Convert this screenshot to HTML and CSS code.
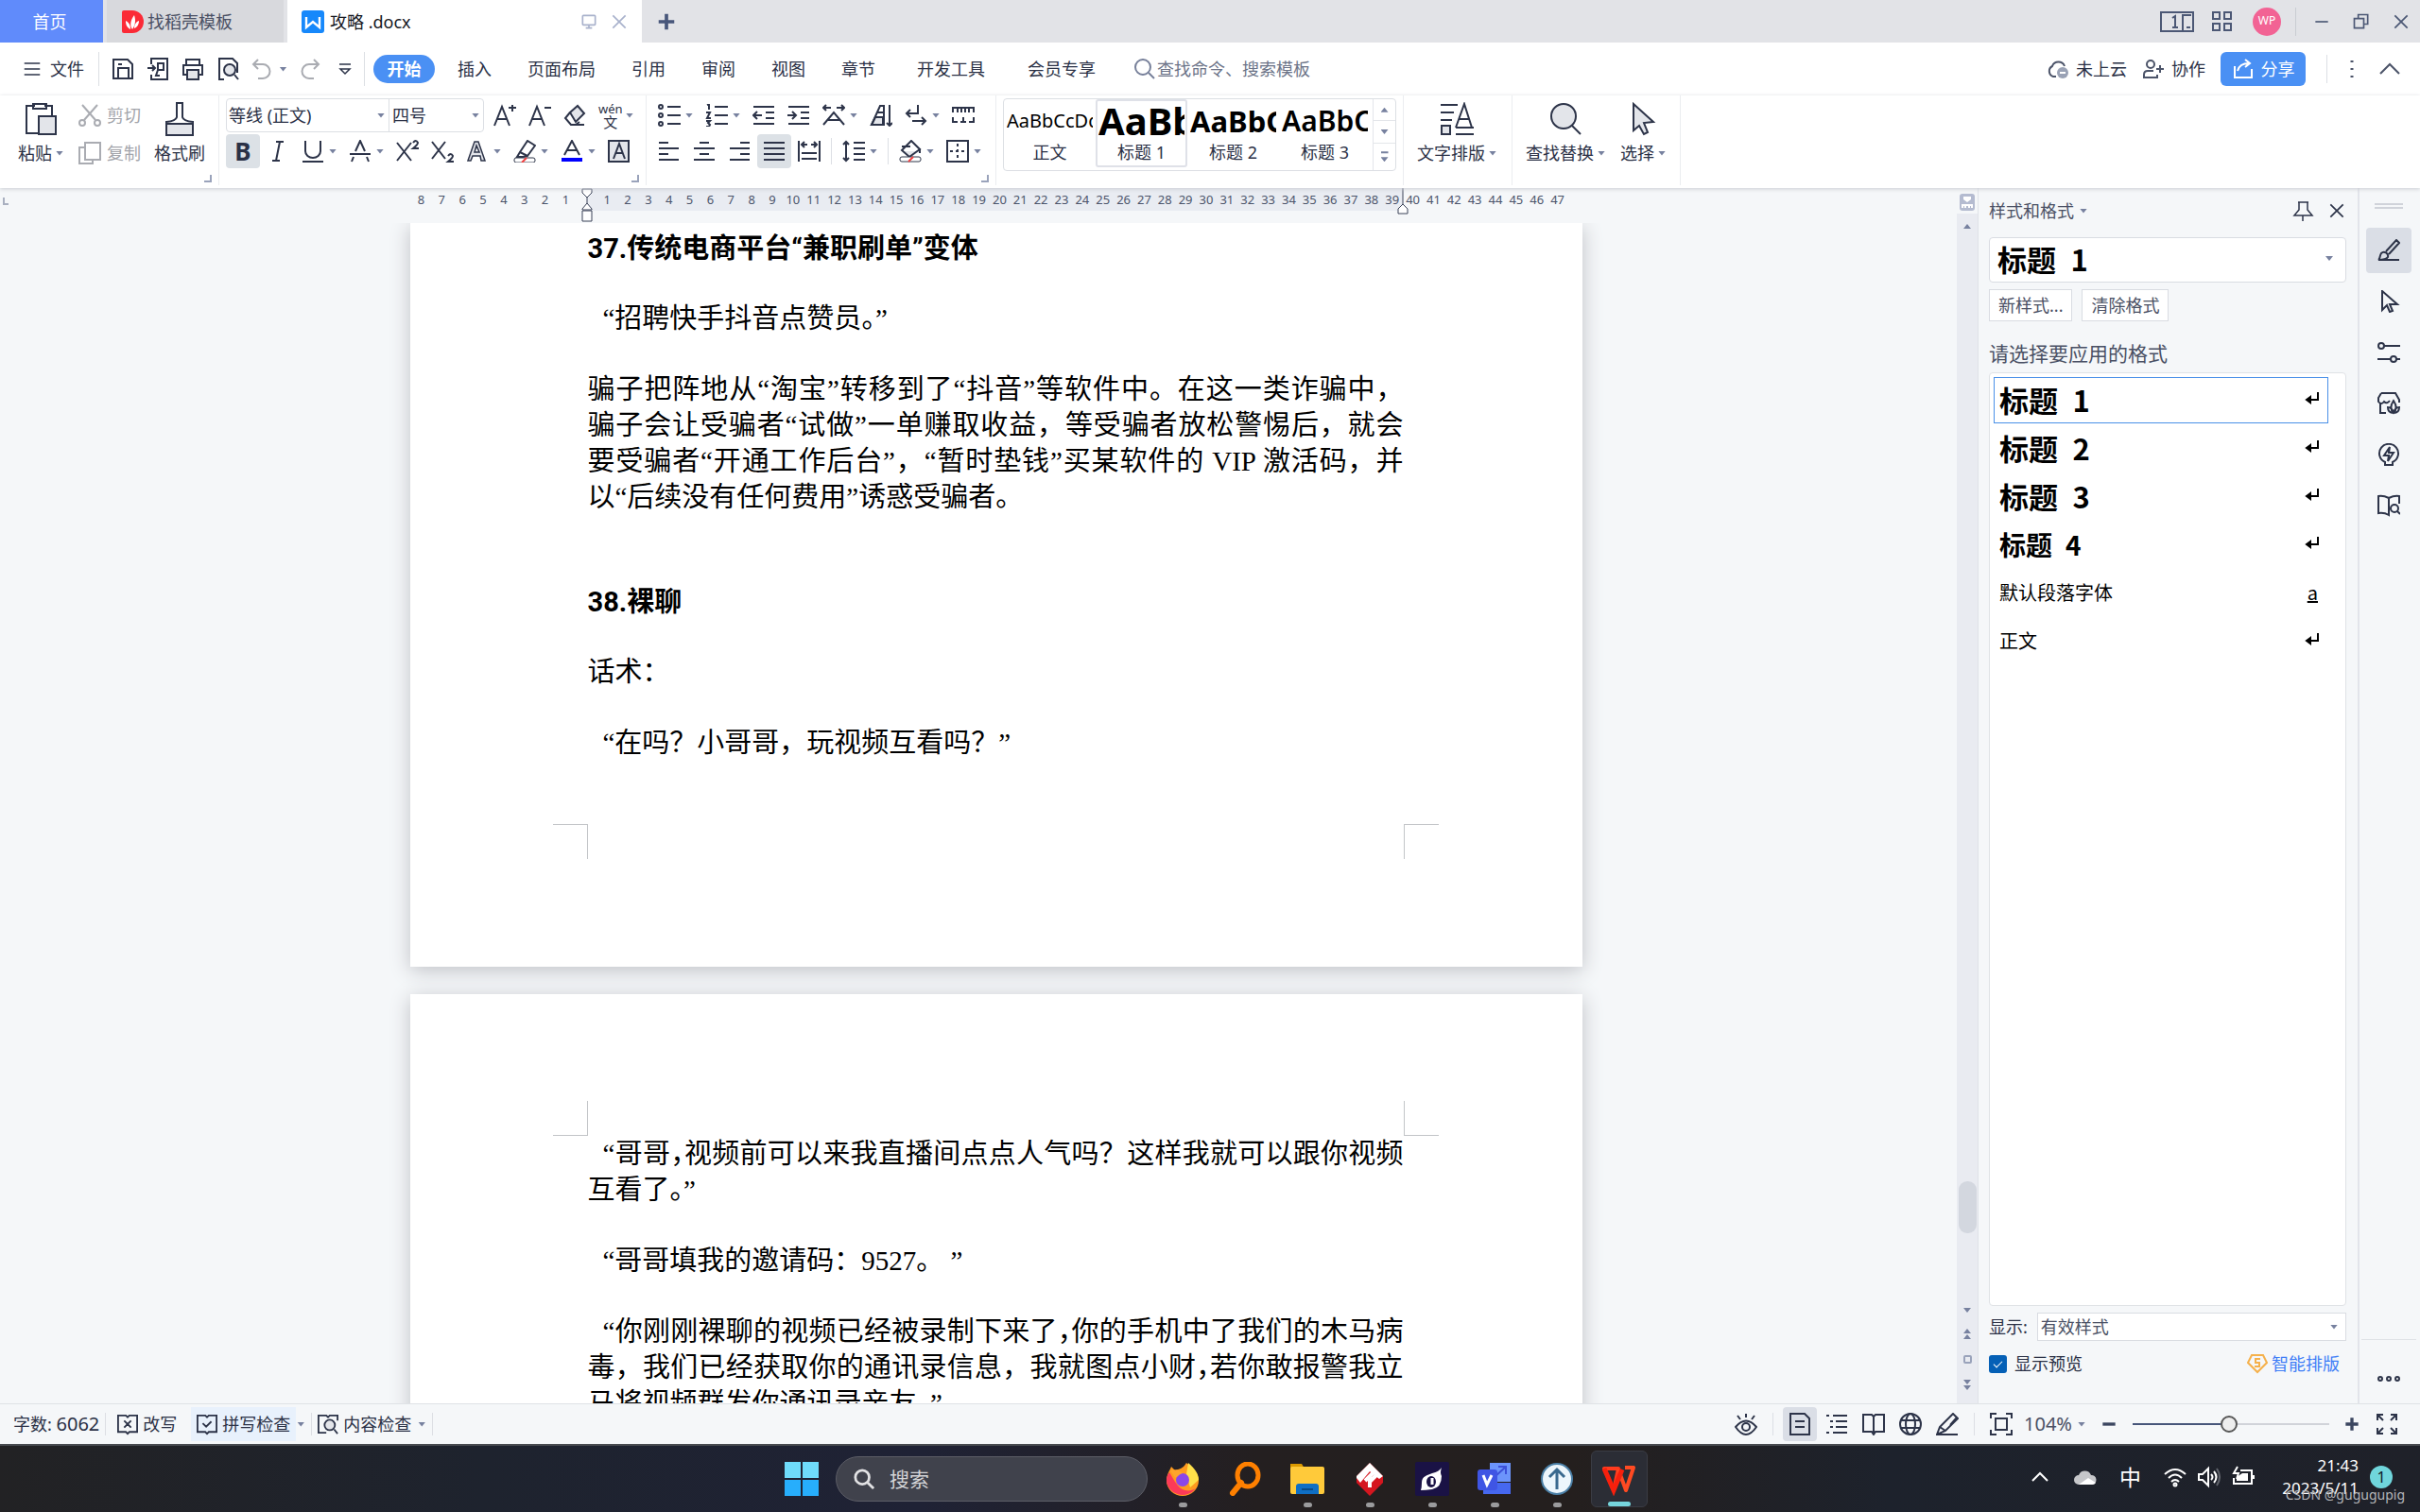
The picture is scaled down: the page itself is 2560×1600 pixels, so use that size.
FILE: index.html
```html
<!DOCTYPE html>
<html lang="zh-CN">
<head>
  <meta charset="UTF-8">
  <meta name="viewport" content="width=device-width, initial-scale=1.0">
  <title>攻略 .docx</title>
  <link rel="stylesheet" href="styles.css">
</head>
<body>

<!-- 标题栏 -->
<header class="titlebar">
  <button class="tab tab-home">首页</button>
  <button class="tab tab-docer">
    <svg width="24" height="24" viewBox="0 0 24 24"><path d="M3 0h9a12 12 0 0 1 0 24H3a2 2 0 0 1-2-2V2a2 2 0 0 1 2-2z" fill="#fb2a36"/><path d="M12 20c-3-4-2-10 2-15 2 6 1 11-2 15zM10 20c-4-2-5-5-5-9 4 2 5 5 5 9zM14 19c0-4 2-7 5-8 0 4-2 7-5 8z" fill="#fff"/></svg>
    <span>找稻壳模板</span>
  </button>
  <div class="tab tab-doc">
    <svg width="24" height="24" viewBox="0 0 24 24"><rect width="24" height="24" rx="3" fill="#1688fb"/><path d="M5 7v11l7-6 7 6V7" fill="none" stroke="#fff" stroke-width="2.4"/></svg>
    <span class="tab-name">攻略 .docx</span>
    <svg class="ic soft" viewBox="0 0 24 24"><rect x="4" y="4" width="16" height="12" rx="1"/><path d="M12 16v4M8 20h8"/></svg>
    <svg class="ic soft" viewBox="0 0 24 24"><path d="M4 4l16 16M20 4L4 20"/></svg>
  </div>
  <button class="tab-add" aria-label="新建"><svg class="ic bold" viewBox="0 0 24 24"><path d="M12 3v18M3 12h18"/></svg></button>
  <div class="window-tools">
    <svg class="ic wide" viewBox="0 0 36 24"><rect x="1" y="2" width="34" height="20"/><path d="M13 8l3-2v12M13 18h6M24 22V5h9M28 18h4"/></svg>
    <svg class="ic" viewBox="0 0 24 24"><path d="M2 2h7v7H2zM14 2h7v7h-7zM2 14h7v7H2zM14 14h7v7h-7z"/></svg>
    <span class="avatar">WP</span>
    <span class="rule"></span>
    <svg class="ic" viewBox="0 0 24 24"><path d="M4 12h16"/></svg>
    <svg class="ic" viewBox="0 0 24 24"><path d="M3 8h12v12H3zM8 8V3h12v12h-5"/></svg>
    <svg class="ic" viewBox="0 0 24 24"><path d="M4 4l16 16M20 4L4 20"/></svg>
  </div>
</header>

<!-- 菜单栏 -->
<nav class="menubar">
  <button class="file-menu"><svg class="ic" viewBox="0 0 24 24"><path d="M1 4h22M1 12h22M1 20h22"/></svg>文件</button>
  <span class="rule"></span>
  <div class="quick">
    <button aria-label="保存"><svg class="ic" viewBox="0 0 24 24"><path d="M2 2h15l5 5v15H2zM7 22V11h11v11M7 7h4"/></svg></button>
    <button aria-label="输出为PDF"><svg class="ic" viewBox="0 0 24 24"><path d="M5 7V1h17v22H5v-5M1 11h8M6 8l3 3-3 3M12 6h6v7h-6zM12 13l-2 6h4"/></svg></button>
    <button aria-label="打印"><svg class="ic" viewBox="0 0 24 24"><path d="M5 8V2h14v6M5 18H2V8h20v10h-3"/><rect class="tint" x="6" y="13" width="12" height="10"/></svg></button>
    <button aria-label="打印预览"><svg class="ic" viewBox="0 0 24 24"><path d="M8 23H3V1h14l5 5v10M19 18l4 5"/><circle class="tint" cx="14" cy="13" r="6"/></svg></button>
    <button class="drop" aria-label="撤销"><svg class="ic faint" viewBox="0 0 24 24"><path d="M8 2L3 7l5 5M3 7h10a7 7 0 0 1 0 15H8"/></svg><i class="caret"></i></button>
    <button aria-label="恢复"><svg class="ic faint" viewBox="0 0 24 24"><path d="M16 2l5 5-5 5M21 7H11a7 7 0 0 0 0 15h5"/></svg></button>
    <button aria-label="自定义"><svg class="ic" viewBox="0 0 24 24"><path d="M6 7h12M7 12l5 5 5-5z" stroke-width="1.5"/></svg></button>
  </div>
  <span class="rule"></span>
  <div class="menu-tabs">
    <button class="active">开始</button>
    <button>插入</button>
    <button>页面布局</button>
    <button>引用</button>
    <button>审阅</button>
    <button>视图</button>
    <button>章节</button>
    <button class="roomy">开发工具</button>
    <button class="roomy">会员专享</button>
  </div>
  <label class="search"><svg class="ic" viewBox="0 0 24 24"><circle cx="10" cy="10" r="8"/><path d="M16 16l6 6"/></svg><input type="text" placeholder="查找命令、搜索模板"></label>
  <div class="menu-right">
    <button><svg class="ic" viewBox="0 0 24 24"><path d="M10 20H7a6 6 0 0 1-1-11 7 7 0 0 1 13 0"/><circle cx="17" cy="16" r="6" fill="#9aa2b5" stroke="none"/><path d="M14 16h6" stroke="#fff"/></svg>未上云</button>
    <button><svg class="ic" viewBox="0 0 24 24"><circle cx="9" cy="7" r="4"/><path d="M16 18v3H2v-3q0-4 4-4h6M19 8v8M15 12h8"/></svg>协作</button>
    <button class="share"><svg class="ic" viewBox="0 0 24 24"><path d="M3 9v12h18v-9M6 14q2-8 12-8M14 2l5 4-5 4"/></svg>分享</button>
    <span class="rule"></span>
    <svg class="ic" viewBox="0 0 24 24"><path d="M12 3v2M12 11v2M12 19v2" stroke-width="3"/></svg>
    <svg class="ic" viewBox="0 0 24 24"><path d="M2 17L12 7l10 10"/></svg>
  </div>
</nav>

<!-- 功能区 -->
<section class="ribbon">
  <div class="group clipboard">
    <button class="big"><svg class="ic large" viewBox="0 0 36 36"><path d="M12 4H3v29h13M22 4h8v10M10 2h14v5H10z"/><rect class="tint" x="16" y="15" width="18" height="19"/></svg><span>粘贴<i class="caret"></i></span></button>
    <div class="stack">
      <button class="faint"><svg class="ic" viewBox="0 0 24 24"><path d="M4 1l14 16M20 1L6 17"/><circle cx="4" cy="20" r="3"/><circle cx="20" cy="20" r="3"/></svg>剪切</button>
      <button class="faint"><svg class="ic" viewBox="0 0 24 24"><path d="M7 6H1v17h14v-4"/><rect x="7" y="1" width="16" height="18"/></svg>复制</button>
    </div>
    <button class="big"><svg class="ic large" viewBox="0 0 36 36"><path d="M15 16V1h6v15q1 4 11 5v14H4V21q10-1 11-5z"/><path class="tint" d="M4 23h28v12H4z"/></svg><span>格式刷</span></button>
    <i class="corner"></i>
  </div>

  <div class="group fonts">
    <div class="row">
      <div class="combos">
        <label class="combo font-name"><select aria-label="字体"><option>等线 (正文)</option></select><i class="caret"></i></label>
        <label class="combo font-size"><select aria-label="字号"><option>四号</option></select><i class="caret"></i></label>
      </div>
      <button class="tool"><svg class="ic" viewBox="0 0 24 24"><path d="M1 23L9 3l8 20M4 16h10M20 1v7M16 4h8"/></svg></button>
      <button class="tool"><svg class="ic" viewBox="0 0 24 24"><path d="M1 23L9 3l8 20M4 16h10M17 4h7"/></svg></button>
      <button class="tool"><svg class="ic" viewBox="0 0 24 24"><path class="tint" d="M7 9l8-7 7 8-9 9z"/><path d="M7 9l-5 6 6 7h5l4-3M8 22h14"/></svg></button>
      <button class="tool drop pinyin"><span>wén<b>文</b></span><i class="caret"></i></button>
    </div>
    <div class="row">
      <button class="tool on glyph-b">B</button>
      <button class="tool"><svg class="ic" viewBox="0 0 24 24"><path d="M10 2h8M6 22h8M14 2l-4 20"/></svg></button>
      <button class="tool drop"><svg class="ic" viewBox="0 0 24 24"><path d="M4 1v11a8 7 0 0 0 16 0V1M1 23h22"/></svg><i class="caret"></i></button>
      <button class="tool drop"><svg class="ic" viewBox="0 0 24 24"><path d="M7 12l5-11 5 11M1 15h22M5 18l-2 5M19 18l2 5"/></svg><i class="caret"></i></button>
      <button class="tool"><svg class="ic" viewBox="0 0 24 24"><path d="M1 3l15 19M16 3L1 22M18 3q3-4 5 0 0 2-5 6h6"/></svg></button>
      <button class="tool"><svg class="ic" viewBox="0 0 24 24"><path d="M1 2l14 18M15 2L1 20M18 17q3-4 5 0 0 2-5 6h6"/></svg></button>
      <button class="tool drop"><svg class="ic" viewBox="0 0 24 24"><path class="tint" stroke-width="1.5" d="M2 22L9 2h4l7 20h-4l-1-5H7l-2 5zM9 13h5l-3-7z"/></svg><i class="caret"></i></button>
      <button class="tool drop"><svg class="ic" viewBox="0 0 24 24"><path d="M7 13l8-12 8 5-8 11zM7 13l-3 5h6l5-1"/><rect x="1" y="19" width="22" height="5" rx="2" fill="#fff" stroke-width="1"/><path d="M9 24l5-5" stroke="#f04040"/></svg><i class="caret"></i></button>
      <button class="tool drop"><svg class="ic" viewBox="0 0 24 24"><path d="M4 16l8-15 8 15M7 11h10"/><path d="M1 21h22" stroke="#00f" stroke-width="4"/></svg><i class="caret"></i></button>
      <button class="tool"><svg class="ic" viewBox="0 0 24 24"><rect class="tint" x="1" y="1" width="21" height="22"/><path d="M6 20l6-16 6 16M8 14h8"/></svg></button>
    </div>
    <i class="corner"></i>
  </div>

  <div class="group paragraph">
    <div class="row">
      <button class="tool drop"><svg class="ic" viewBox="0 0 24 24"><circle cx="3" cy="3" r="2"/><circle cx="3" cy="12" r="2"/><circle cx="3" cy="21" r="2"/><path d="M10 3h14M10 12h14M10 21h14"/></svg><i class="caret"></i></button>
      <button class="tool drop"><svg class="ic" viewBox="0 0 24 24"><path d="M2 1l2-1v6M1 9h4l-3 6h4M1 18h4l-2 2 2 2-1 2H1M10 3h14M10 12h14M10 21h14"/></svg><i class="caret"></i></button>
      <button class="tool"><svg class="ic" viewBox="0 0 24 24"><path d="M1 3h22M14 9h9M14 15h9M1 21h22M10 12H1M5 8l-4 4 4 4"/></svg></button>
      <button class="tool"><svg class="ic" viewBox="0 0 24 24"><path d="M1 3h22M14 9h9M14 15h9M1 21h22M0 12h9M5 8l4 4-4 4"/></svg></button>
      <button class="tool drop"><svg class="ic" viewBox="0 0 24 24"><path d="M1 22L12 9l11 13M6 17h12M9 4H1M4 1L1 4l3 3M15 4h8M20 1l3 3-3 3"/></svg><i class="caret"></i></button>
      <button class="tool"><svg class="ic" viewBox="0 0 24 24"><path class="tint" d="M6 14h8v8H2z"/><path d="M2 22L11 2h4v20zM8 9h7M6 14h8M21 1v22M18 20l3 3 3-3"/></svg></button>
      <button class="tool drop"><svg class="ic" viewBox="0 0 24 24"><path d="M14 1v9H2M6 6l-4 4 4 4M8 18h13M18 14l4 4-4 4"/></svg><i class="caret"></i></button>
      <button class="tool"><svg class="ic" viewBox="0 0 24 24"><path d="M1 9V4h22v5M6 4v5M10 4v5M14 4v5M18 4v5M1 14v5h5M23 14v5h-5M9 19h6M12 14v5"/></svg></button>
    </div>
    <div class="row">
      <button class="tool"><svg class="ic" viewBox="0 0 24 24"><path d="M1 3h10M1 9h21M1 15h10M1 21h21"/></svg></button>
      <button class="tool"><svg class="ic" viewBox="0 0 24 24"><path d="M7 3h10M1 9h22M7 15h10M1 21h22"/></svg></button>
      <button class="tool"><svg class="ic" viewBox="0 0 24 24"><path d="M13 3h10M2 9h21M13 15h10M2 21h21"/></svg></button>
      <button class="tool on"><svg class="ic" viewBox="0 0 24 24"><path d="M1 3h22M1 9h22M1 15h22M1 21h22"/></svg></button>
      <button class="tool"><svg class="ic" viewBox="0 0 24 24"><path d="M1 1v22M23 1v22M4 5h6M14 5h6M7 2L4 5l3 3M17 2l3 3-3 3M4 14h16M4 20h16"/></svg></button>
      <span class="rule"></span>
      <button class="tool drop"><svg class="ic" viewBox="0 0 24 24"><path d="M4 2v20M1 5l3-3 3 3M1 19l3 3 3-3M12 3h12M12 9h12M12 15h12M12 21h12"/></svg><i class="caret"></i></button>
      <span class="rule"></span>
      <button class="tool drop"><svg class="ic" viewBox="0 0 24 24"><path class="tint" d="M4 12h18l-9 6z" stroke="none"/><path d="M3 7h9M13 1L3 11l8 7 11-8zM22 9v5"/><rect x="1" y="18" width="22" height="5" rx="2" fill="#fff" stroke-width="1"/><path d="M10 23l5-5" stroke="#f04040"/></svg><i class="caret"></i></button>
      <button class="tool drop"><svg class="ic" viewBox="0 0 24 24"><rect x="1" y="1" width="22" height="22"/><path d="M12 4v16M4 12h16" stroke-dasharray="3 3"/></svg><i class="caret"></i></button>
    </div>
    <i class="corner"></i>
  </div>

  <div class="group styles">
    <div class="gallery">
      <button class="style-card"><span class="sample s0">AaBbCcDd</span><span>正文</span></button>
      <button class="style-card current"><span class="sample s1">AaBb</span><span>标题 1</span></button>
      <button class="style-card"><span class="sample s2">AaBbC</span><span>标题 2</span></button>
      <button class="style-card"><span class="sample s3">AaBbC</span><span>标题 3</span></button>
      <div class="gallery-nav">
        <button aria-label="上一行"><i class="caret up"></i></button>
        <button aria-label="下一行"><i class="caret"></i></button>
        <button aria-label="更多"><i class="caret more"></i></button>
      </div>
    </div>
  </div>

  <div class="group single">
    <button class="big"><svg class="ic large" viewBox="0 0 36 36"><path d="M1 3h18M1 11h14M1 19h12M17 27L26 2l8 25M20 18h11M17 27h19M17 34h19"/><rect class="tint" x="2" y="25" width="9" height="9"/></svg><span>文字排版<i class="caret"></i></span></button>
  </div>
  <div class="group pair">
    <button class="big"><svg class="ic large" viewBox="0 0 36 36"><circle class="tint" cx="16" cy="15" r="13"/><path d="M25 25l9 9"/></svg><span>查找替换<i class="caret"></i></span></button>
    <button class="big"><svg class="ic large" viewBox="0 0 36 36"><path class="tint" d="M8 2v28l6-5 5 9 4-2-4-10 10-1z"/></svg><span>选择<i class="caret"></i></span></button>
  </div>
</section>

<main class="work">
  <!-- 文档 -->
  <section class="canvas">
    <i class="tabstop"></i>
    <div class="ruler" id="ruler">
      <svg class="indent-left" width="14" height="37" viewBox="0 0 14 37"><path d="M2 1h10v4l-5 5-5-5zM7 10v6M7 16l5 6v1H2v-1zM2 24h10v11H2z"/></svg>
      <svg class="indent-right" width="14" height="37" viewBox="0 0 14 37"><path d="M7 0v17M7 17l5 5v5H2v-5z"/></svg>
    </div>
    <div class="pages">
      <article class="page first">
        <h2>37.传统电商平台“兼职刷单”变体</h2>
        <p class="quote">“招聘快手抖音点赞员<span class="halt">。</span>”</p>
        <p>骗子把阵地从“淘宝”转移到了“抖音”等软件中。在这一类诈骗中，骗子会让受骗者“试做”一单赚取收益，等受骗者放松警惕后，就会要受骗者“开通工作后台”，“暂时垫钱”买某软件的 VIP 激活码，并以“后续没有任何费用”诱惑受骗者。</p>
        <h2>38.裸聊</h2>
        <p>话术：</p>
        <p class="quote">“在吗？小哥哥，玩视频互看吗？”</p>
        <i class="crop bl"></i><i class="crop br"></i>
      </article>
      <article class="page">
        <i class="crop tl"></i><i class="crop tr"></i>
        <p class="quote">“哥哥<span class="halt">，</span>视频前可以来我直播间点点人气吗？这样我就可以跟你视频互看了<span class="halt">。</span>”</p>
        <p class="quote">“哥哥填我的邀请码：9527。 ”</p>
        <p class="quote">“你刚刚裸聊的视频已经被录制下来了<span class="halt">，</span>你的手机中了我们的木马病毒，我们已经获取你的通讯录信息，我就图点小财<span class="halt">，</span>若你敢报警我立马将视频群发你通讯录亲友。”</p>
      </article>
    </div>
  </section>

  <div class="scrollbar">
    <svg class="ruler-toggle" width="16" height="18" viewBox="0 0 16 18"><rect width="16" height="18" rx="3" fill="#b4bbd0"/><path d="M4 3h8v3L8 9 4 6zM2 11h12v4h-2v-2h-1v2H9v-2H7v2H5v-2H4v2H2z" fill="#fff"/></svg>
    <div class="track">
      <i class="caret up"></i>
      <div class="thumb"></div>
      <div class="jump">
        <i class="caret"></i>
        <span><i class="caret up"></i><i class="caret up"></i></span>
        <b></b>
        <span><i class="caret"></i><i class="caret"></i></span>
      </div>
    </div>
  </div>

  <!-- 样式和格式 -->
  <aside class="panel">
    <div class="panel-head">
      <button>样式和格式<i class="caret"></i></button>
      <svg class="ic" viewBox="0 0 24 24"><path d="M7 3h11M8 3v8l-5 6h19l-5-6V3M12 17v6" stroke-width="1.5"/></svg>
      <svg class="ic" viewBox="0 0 24 24"><path d="M4 4l16 16M20 4L4 20"/></svg>
    </div>
    <label class="combo current-style"><select aria-label="当前样式"><option>标题&ensp;1</option></select><i class="caret"></i></label>
    <div class="panel-buttons"><button>新样式...</button><button>清除格式</button></div>
    <h3>请选择要应用的格式</h3>
    <ul class="style-list">
      <li><button class="l1 picked"><span>标题&ensp;1</span><svg width="16" height="14" viewBox="0 0 16 14"><path d="M14 1v8H3M6 6L2 9l4 3z"/></svg></button></li>
      <li><button class="l1"><span>标题&ensp;2</span><svg width="16" height="14" viewBox="0 0 16 14"><path d="M14 1v8H3M6 6L2 9l4 3z"/></svg></button></li>
      <li><button class="l1"><span>标题&ensp;3</span><svg width="16" height="14" viewBox="0 0 16 14"><path d="M14 1v8H3M6 6L2 9l4 3z"/></svg></button></li>
      <li><button class="l4"><span>标题&ensp;4</span><svg width="16" height="14" viewBox="0 0 16 14"><path d="M14 1v8H3M6 6L2 9l4 3z"/></svg></button></li>
      <li><button><span>默认段落字体</span><u>a</u></button></li>
      <li><button><span>正文</span><svg width="16" height="14" viewBox="0 0 16 14"><path d="M14 1v8H3M6 6L2 9l4 3z"/></svg></button></li>
    </ul>
    <div class="panel-show">
      <label for="show">显示:</label>
      <div class="combo"><select id="show"><option>有效样式</option></select><i class="caret"></i></div>
    </div>
    <div class="panel-foot">
      <label><input type="checkbox" checked>显示预览</label>
      <a href="#"><svg width="22" height="22" viewBox="0 0 22 22"><path d="M5 2h12l4 8-10 10L1 10z" fill="none" stroke="#f5b14c" stroke-width="2"/><path d="M14 6H9v4h4v4H8" fill="none" stroke="#f5b14c" stroke-width="2"/></svg>智能排版</a>
    </div>
  </aside>

  <nav class="rail">
    <i class="grip"></i>
    <button class="on" aria-label="样式"><svg class="ic" viewBox="0 0 24 24"><path d="M9 13L20 1l3 3-11 12M1 22c2-1 1-4 3-7 3-3 8 0 7 4-1 2-4 3-10 3zM1 22h22"/></svg></button>
    <button aria-label="选择"><svg class="ic" viewBox="0 0 24 24"><path d="M5 1v20l5-5 3 7 3-1-3-7h8z"/></svg></button>
    <button aria-label="属性"><svg class="ic" viewBox="0 0 24 24"><circle cx="4" cy="5" r="3"/><circle cx="17" cy="19" r="3"/><path d="M7 5h17M0 19h14M20 19h4"/></svg></button>
    <button aria-label="稻壳"><svg class="ic" viewBox="0 0 24 24"><path d="M4 1h15l4 7v3M4 1L1 6v4q3 4 6 0 3 3 6-1M3 12v10h6M17 9c4 6 3 10 0 13-3-3-4-7 0-13zM17 22c-4 0-6-2-6-6 3 0 5 2 6 6zM17 22c4 0 6-2 6-6-3 0-5 2-6 6z"/></svg></button>
    <button aria-label="灵感"><svg class="ic" viewBox="0 0 24 24"><path d="M8 20a10 10 0 1 1 8 0v3H8zM13 4l-6 9h5l-1 6 6-9h-5z"/></svg></button>
    <button aria-label="查阅"><svg class="ic" viewBox="0 0 24 24"><path d="M12 4Q6 1 1 2v18q6-1 11 2zM12 4q6-3 11-2v8"/><circle cx="18" cy="15" r="4"/><path d="M21 18l3 3"/></svg></button>
    <button class="rail-more" aria-label="更多"><svg class="ic" viewBox="0 0 24 24"><circle cx="3" cy="12" r="2"/><circle cx="12" cy="12" r="2"/><circle cx="21" cy="12" r="2"/></svg></button>
  </nav>
</main>

<!-- 状态栏 -->
<footer class="status">
  <span class="words">字数: <span class="num">6062</span></span>
  <span class="rule"></span>
  <button><svg class="ic" viewBox="0 0 24 24"><path d="M1 2h9l2 2 2-2h9v19h-9l-2 2-2-2H1zM8 8l8 8M16 8l-8 8"/></svg>改写</button>
  <button class="spell"><svg class="ic" viewBox="0 0 24 24"><path d="M1 2h9l2 2 2-2h9v19h-9l-2 2-2-2H1zM7 11l4 4 6-6"/></svg>拼写检查</button><i class="caret"></i>
  <span class="rule"></span>
  <button><svg class="ic" viewBox="0 0 24 24"><path d="M10 22H1V2h9l2 2 2-2h9v6M19 18l4 5"/><circle class="tint" cx="14" cy="13" r="6"/></svg>内容检查</button><i class="caret"></i>
  <span class="rule"></span>
  <div class="views">
    <button aria-label="护眼"><svg class="ic" viewBox="0 0 24 24"><path d="M1 15q11-13 22 0-11 16-22 0zM12 1v4M3 3l3 4M21 3l-3 4"/><circle cx="12" cy="15" r="4"/></svg></button>
    <span class="rule"></span>
    <button class="on" aria-label="页面视图"><svg class="ic" viewBox="0 0 24 24"><path d="M2 1h15l5 5v17H2zM7 9h10M7 15h10"/></svg></button>
    <button aria-label="大纲"><svg class="ic" viewBox="0 0 24 24"><path d="M1 3h3M8 3h15M5 9h3M11 9h12M5 15h3M11 15h12M1 21h3M8 21h15"/></svg></button>
    <button aria-label="阅读版式"><svg class="ic" viewBox="0 0 24 24"><path d="M1 2h9l2 2 2-2h9v18h-9l-2 3-2-3H1zM12 4v18"/></svg></button>
    <button aria-label="Web版式"><svg class="ic" viewBox="0 0 24 24"><circle cx="12" cy="12" r="11"/><ellipse cx="12" cy="12" rx="5" ry="11"/><path d="M2 8h20M2 16h20"/></svg></button>
    <button aria-label="写作模式"><svg class="ic" viewBox="0 0 24 24"><path d="M1 23l3-8L18 1l5 5L10 19zM1 23h22M4 15l6 4M15 13l7-8"/></svg></button>
    <span class="rule"></span>
    <button aria-label="适应页面"><svg class="ic" viewBox="0 0 24 24"><path d="M1 6V1h6M17 1h6v5M23 18v5h-6M7 23H1v-5M6 6h12v12H6z"/></svg></button>
    <button class="zoom-value"><span class="num">104%</span><i class="caret"></i></button>
    <button aria-label="缩小"><svg class="ic bold" viewBox="0 0 24 24"><path d="M4 12h16"/></svg></button>
    <input type="range" min="0" max="100" value="49" aria-label="显示比例">
    <button aria-label="放大"><svg class="ic bold" viewBox="0 0 24 24"><path d="M4 12h16M12 4v16"/></svg></button>
    <button aria-label="全屏"><svg class="ic" viewBox="0 0 24 24"><path d="M2 8V2h6M2 2l6 6M16 2h6v6M22 2l-6 6M22 16v6h-6M22 22l-6-6M8 22H2v-6M2 22l6-6"/></svg></button>
  </div>
</footer>

<!-- 任务栏 -->
<footer class="taskbar">
  <div class="apps">
    <button class="app start" aria-label="开始"><svg viewBox="0 0 36 36"><path d="M0 0h17v17H0zM19 0h17v17H19z" fill="#6fdcfb"/><path d="M0 19h17v17H0zM19 19h17v17H19z" fill="#27aefc"/></svg></button>
    <label class="task-search"><svg viewBox="0 0 24 24"><circle cx="10" cy="10" r="8"/><path d="M16 16l7 7"/></svg><input type="text" placeholder="搜索"></label>
    <button class="app run" aria-label="Firefox"><svg viewBox="0 0 36 36"><path d="M22 1c7 5 13 11 13 19a17 16 0 0 1-34 0C1 13 5 8 6 5l4 4c4-2 8-1 12-8z" fill="#ff9a1f"/><path d="M24 1c7 6 11 12 11 18l-9 8-4-14z" fill="#ffe14a"/><path d="M1 19a17 16 0 0 0 31 9c-6 4-15 3-19-3-4-5-6-9-9-14-2 3-3 5-3 8z" fill="#fb3a58"/><circle cx="18" cy="19" r="7" fill="#8b46e8"/><path d="M5 9c6-2 10 0 13 3-4 1-5 4-8 5z" fill="#ffa52b"/></svg></button>
    <button class="app" aria-label="Everything"><svg viewBox="0 0 36 36"><ellipse cx="21" cy="14" rx="11" ry="12" fill="none" stroke="#ff8000" stroke-width="5"/><path d="M14 22L5 33" stroke="#ff8000" stroke-width="6" stroke-linecap="round"/></svg></button>
    <button class="app run" aria-label="文件资源管理器"><svg viewBox="0 0 36 36"><path d="M0 2h12l3 5h-15z" fill="#dc9a00"/><rect y="5" width="36" height="29" rx="2" fill="#ffca3a"/><path d="M6 34V26q0-3 3-3h18q3 0 3 3v8z" fill="#0f6fc5"/><path d="M12 29h12" stroke="#084a88" stroke-width="2"/></svg></button>
    <button class="app run" aria-label="思维导图"><svg viewBox="0 0 36 36"><path d="M18 1l14 14v7L18 36 4 22v-7z" fill="#d5161f"/><path d="M18 1l14 14-4 3-10-8-10 12-4-5v-2z" fill="#fff"/><path d="M13 20l9-9M18 15v12M18 21l8-8" stroke="#fff" stroke-width="4"/></svg></button>
    <button class="app run" aria-label="绘图"><svg viewBox="0 0 36 36"><rect width="36" height="36" rx="2" fill="#1a1245"/><path d="M28 6q-2 5 0 9 0 12-10 14-7 1-12 1 1-3 1-8c0-7 6-8 11-10 5-1 8-3 10-6z" fill="#fff"/><ellipse cx="17" cy="21" rx="5" ry="6" fill="#1a1245"/><path d="M18 17v7" stroke="#fff" stroke-width="3"/></svg></button>
    <button class="app run" aria-label="Visio"><svg viewBox="0 0 36 36"><rect x="13" y="1" width="22" height="20" fill="#6c94fb"/><rect x="6" y="22" width="29" height="12" fill="#4668f0"/><path d="M18 16L30 5M22 5h8v8" fill="none" stroke="#3c50d8" stroke-width="2"/><rect y="8" width="21" height="22" rx="3" fill="#3f55e4"/><path d="M6 14l4 10 5-10" fill="none" stroke="#fff" stroke-width="3"/></svg></button>
    <button class="app run" aria-label="更新"><svg viewBox="0 0 36 36"><circle cx="18" cy="18" r="16" fill="#edf6fc" stroke="#4a7fa6" stroke-width="2"/><path d="M18 29V8M10 16l8-8 8 8" fill="none" stroke="#3a698e" stroke-width="3"/></svg></button>
    <button class="app run focus" aria-label="WPS"><svg viewBox="0 0 36 36"><path d="M2 7h15L12 30z" fill="none" stroke="#ff3b1e" stroke-width="4" stroke-linejoin="round"/><path d="M17 8l8 22 8-24h-9" fill="none" stroke="#ff4a22" stroke-width="4" stroke-linejoin="round"/><path d="M2 7l10 23 9-22" fill="none" stroke="#f7200d" stroke-width="5"/></svg></button>
  </div>
  <div class="tray">
    <svg viewBox="0 0 24 24"><path d="M4 16l8-8 8 8"/></svg>
    <svg viewBox="0 0 24 24"><path d="M5 20a5 5 0 0 1 0-10 7 7 0 0 1 13 0 5 5 0 0 1 1 10z" fill="#c6c7ca" stroke="none"/><path d="M5 20l10-7 8 5q-1 2-4 2z" fill="#fff" stroke="none"/></svg>
    <span class="ime">中</span>
    <svg viewBox="0 0 24 24"><path d="M1 9q11-10 22 0M5 13q7-7 14 0M8 17q4-4 8 0"/><circle cx="12" cy="20" r="1.5"/></svg>
    <svg viewBox="0 0 24 24"><path d="M1 9h4l6-6v18l-6-6H1zM14 9q3 3 0 6M17 6q5 6 0 12"/><path d="M20 3q6 9 0 18" stroke="#60636b"/></svg>
    <svg viewBox="0 0 24 24"><path d="M9 5h12v14H2v-6M23 10v4"/><path d="M11 8h6v8H5v-4z" fill="#fff" stroke="none"/><path d="M6 1L2 8h5l-2 6" /></svg>
    <div class="clock"><span>21:43</span><span>2023/5/11</span></div>
    <span class="badge">1</span>
  </div>
  <span class="mark">CSDN @gugugupig</span>
</footer>

<script>
  // 标尺刻度: 左侧 8..1, 零点留空, 右侧 1..47
  const ruler = document.getElementById("ruler");
  for (let i = -8; i <= 47; i++) {
    const tick = document.createElement("span");
    tick.textContent = i === 0 ? "" : Math.abs(i);
    ruler.appendChild(tick);
  }
</script>

</body>
</html>
```
FILE: styles.css
```css
* {
  box-sizing: border-box;
}
body {
  margin: 0;
  height: 100vh;
  display: flex;
  flex-direction: column;
  overflow: hidden;
  font-family: "Noto Sans", "Noto Sans CJK SC", sans-serif;
  font-size: 18px;
  line-height: 24px;
  color: #2b3146;
  background: #f5f7f9;
}
button, select, input {
  margin: 0;
  padding: 0;
  border: 0;
  background: none;
  font: inherit;
  color: inherit;
}
button {
  display: flex;
  align-items: center;
  justify-content: center;
  white-space: nowrap;
}
select {
  appearance: none;
}
svg {
  flex: none;
}

/* 图标 */
.ic {
  width: 24px;
  height: 24px;
  fill: none;
  stroke: #2d3449;
  stroke-width: 2;
}
.ic.bold {
  stroke: #47567a;
  stroke-width: 4;
}
.ic.soft {
  width: 22px;
  stroke: #a9b2cc;
}
.ic.wide {
  width: 36px;
}
.ic.large {
  width: 36px;
  height: 36px;
}
.ic.faint, .faint .ic {
  stroke: #aaacb2;
}
.tint {
  fill: #e3e5ea;
}
.caret {
  flex: none;
  width: 8px;
  height: 5px;
  background: #77819f;
  clip-path: polygon(0 0, 100% 0, 50% 100%);
}
.caret.up {
  clip-path: polygon(50% 0, 100% 100%, 0 100%);
}
.rule {
  flex: none;
  width: 1px;
  height: 24px;
  background: #dcdfe4;
}
.num {
  font-size: 20px;
}

/* 标题栏 */
.titlebar {
  flex: none;
  height: 45px;
  display: flex;
  align-items: stretch;
  background: #e2e3e7;
}
.tab {
  margin-right: 4px;
}
.tab-home {
  width: 109px;
  padding-right: 4px;
  background: #608bfb;
  color: #fff;
}
.tab-docer {
  width: 187px;
  padding-left: 15px;
  gap: 4px;
  justify-content: flex-start;
  background: #d8d9dd;
  color: #4a5064;
}
.tab-doc {
  width: 375px;
  margin-right: 0;
  padding: 0 13px 0 15px;
  display: flex;
  align-items: center;
  gap: 6px;
  background: #fff;
  color: #16181f;
}
.tab-name {
  flex: 1;
}
.tab-doc .soft {
  height: 20px;
  margin-left: 4px;
}
.tab-add {
  width: 52px;
}
.tab-add .ic {
  width: 22px;
}
.window-tools {
  margin-left: auto;
  padding-right: 8px;
  display: flex;
  align-items: center;
  gap: 18px;
}
.window-tools .ic {
  stroke: #4c5875;
}
.window-tools .ic:nth-last-child(-n+3) {
  height: 20px;
}
.avatar {
  width: 30px;
  height: 30px;
  margin-left: 2px;
  border-radius: 50%;
  background: #f26394;
  color: #fff;
  font-size: 12px;
  line-height: 28px;
  text-align: center;
}
.window-tools .rule {
  margin: 0 -3px;
  height: 30px;
  background: #c9ccd2;
}

/* 菜单栏 */
.menubar {
  flex: none;
  height: 56px;
  display: flex;
  align-items: center;
  background: #fff;
}
.menubar .rule {
  height: 36px;
}
.file-menu {
  padding: 0 15px 0 22px;
  gap: 7px;
}
.file-menu .ic {
  height: 18px;
}
.quick {
  padding: 0 2px 0 6px;
  display: flex;
}
.quick button {
  width: 37px;
  height: 36px;
}
.quick .drop {
  width: 50px;
  gap: 7px;
}
.menu-tabs {
  display: flex;
  margin-left: 9px;
}
.menu-tabs button {
  height: 30px;
  padding: 0 19px;
}
.menu-tabs .active {
  width: 65px;
  margin-right: 5px;
  border-radius: 15px;
  background: #4a90f4;
  color: #fff;
  font-weight: 700;
}
.menu-tabs .roomy {
  padding: 0 20px 0 25px;
}
.search {
  margin-left: 20px;
  display: flex;
  align-items: center;
  gap: 1px;
}
.search .ic {
  stroke: #77809a;
}
.search input {
  width: 200px;
}
.search input::placeholder {
  color: #6c7488;
}
.menu-right {
  margin-left: auto;
  padding-right: 20px;
  display: flex;
  align-items: center;
  gap: 16px;
}
.menu-right button {
  gap: 7px;
}
.menu-right .ic {
  stroke: #4c5469;
}
.menu-right .share {
  width: 90px;
  height: 36px;
  border-radius: 6px;
  background: #4a90f4;
  color: #fff;
}
.menu-right .share .ic {
  stroke: #fff;
}
.menu-right .rule {
  height: 30px;
  margin: 0 -2px 0 6px;
}

/* 功能区 */
.ribbon {
  flex: none;
  position: relative;
  z-index: 1;
  height: 98px;
  display: flex;
  background: #fff;
  box-shadow: 0 1px 4px #c9ccd2;
}
.group {
  position: relative;
  height: 95px;
  padding-top: 3px;
  border-right: 1px solid #ebedf0;
}
.corner {
  position: absolute;
  right: 7px;
  bottom: 3px;
  width: 8px;
  height: 8px;
  border: solid #9aa3bb;
  border-width: 0 2px 2px 0;
}
.big {
  flex-direction: column;
  justify-content: flex-start;
  gap: 6px;
  padding-top: 4px;
}
.big span {
  display: flex;
  align-items: center;
  gap: 4px;
}
.clipboard {
  width: 232px;
  padding-left: 19px;
  display: flex;
  align-items: flex-start;
}
.stack {
  margin: 0 14px 0 16px;
  display: grid;
  gap: 4px;
}
.stack button {
  height: 36px;
  gap: 6px;
  color: #a3a5ab;
}
.fonts {
  width: 452px;
  padding-left: 7px;
}
.row {
  display: flex;
  align-items: center;
  gap: 1px;
  height: 36px;
  margin-bottom: 2px;
}
.combos {
  display: flex;
  width: 273px;
  height: 36px;
  margin-right: 3px;
  border: 1px solid #dcdfe4;
  border-radius: 4px;
}
.combo {
  display: flex;
  align-items: center;
}
.combo select {
  flex: 1;
  min-width: 0;
}
.font-name {
  width: 172px;
  padding: 0 4px 0 2px;
  border-right: 1px solid #dcdfe4;
}
.font-size {
  flex: 1;
  padding: 0 4px 0 3px;
}
.tool {
  width: 36px;
  height: 36px;
  border-radius: 4px;
}
.tool.on {
  background: #dce1e6;
}
.tool.drop {
  width: 49px;
  padding-left: 6px;
  justify-content: flex-start;
  gap: 5px;
}
.glyph-b {
  font-size: 26px;
  font-weight: 700;
}
.pinyin span {
  width: 24px;
  font-size: 13px;
  line-height: 14px;
  display: grid;
  justify-items: center;
}
.pinyin b {
  font-size: 15px;
  font-weight: 400;
}
.paragraph {
  width: 370px;
  padding-left: 6px;
}
.paragraph .rule {
  height: 28px;
  margin: 0 4px;
}
.styles {
  width: 431px;
  padding: 3px 7px;
}
.gallery {
  display: flex;
  height: 77px;
  border: 1px solid #dcdfe4;
  border-radius: 4px;
}
.style-card {
  width: 97px;
  height: 72px;
  padding: 0 1px 2px;
  border: 2px solid transparent;
  flex-direction: column;
  justify-content: space-between;
  align-items: stretch;
}
.style-card.current {
  border-color: #dfe1e8;
  border-radius: 3px;
}
.sample {
  height: 42px;
  overflow: hidden;
  text-align: left;
  line-height: 42px;
  font-weight: 700;
  color: #000;
}
.s0 {
  font-size: 20px;
  font-weight: 400;
}
.s1 {
  font-size: 40px;
}
.s2 {
  font-size: 31px;
}
.s3 {
  font-size: 30px;
  font-weight: 600;
}
.gallery-nav {
  margin-left: auto;
  width: 24px;
  border-left: 1px solid #e4e6ea;
  display: grid;
}
.gallery-nav button + button {
  border-top: 1px solid #e4e6ea;
}
.caret.more {
  height: 11px;
  clip-path: polygon(0 0, 100% 0, 100% 2px, 0 2px, 0 6px, 100% 6px, 50% 100%, 0 6px);
}
.single {
  width: 115px;
  padding-left: 14px;
}
.pair {
  width: 178px;
  padding-left: 14px;
  display: flex;
  align-items: flex-start;
  gap: 16px;
}

/* 文档区 */
.work {
  flex: 1;
  min-height: 0;
  display: flex;
}
.canvas {
  flex: 1;
  min-width: 0;
  position: relative;
  padding-left: 37px;
  display: flex;
  flex-direction: column;
  align-items: center;
}
.tabstop {
  position: absolute;
  left: 3px;
  top: 10px;
  width: 6px;
  height: 8px;
  border: solid #a9b0c0;
  border-width: 0 0 2px 2px;
}
.ruler {
  flex: none;
  position: relative;
  width: 1240px;
  height: 24px;
  margin-bottom: 13px;
  padding: 0 15px 0 1px;
  display: grid;
  grid-template-columns: repeat(56, 1fr);
  justify-items: center;
  background: linear-gradient(to right, transparent 187px, #e9ecf2 187px, #e9ecf2 1050px, transparent 1050px);
  font-size: 13px;
  color: #4c556b;
}
.ruler svg {
  position: absolute;
  top: 0;
  fill: #fff;
  stroke: #3b4358;
}
.indent-left {
  left: 180px;
}
.indent-right {
  left: 1043px;
}
.pages {
  flex: 1;
  min-height: 0;
  width: 100%;
  display: flex;
  flex-direction: column;
  align-items: center;
  gap: 29px;
  overflow: hidden;
}
.page {
  flex: none;
  position: relative;
  width: 1240px;
  padding: 150px 189px 151px 188px;
  background: #fff;
  box-shadow: 0 4px 20px #bfc1c6;
  font-family: "Liberation Serif", "Noto Sans CJK SC", serif;
  font-size: 29px;
  line-height: 38px;
  color: #000;
  text-align: justify;
}
.page.first {
  padding-top: 8px;
  padding-bottom: 181px;
}
.page p {
  margin: 0 0 37px;
}
.page .quote {
  text-indent: 16px;
}
.page h2 {
  margin: 0 0 36px;
  font-family: Roboto, "Noto Sans CJK SC", sans-serif;
  font-size: 29px;
  font-weight: 700;
}
.page p + h2 {
  margin-top: 73px;
}
.halt {
  font-feature-settings: "halt";
}
/* 版心四角标记 */
.crop {
  position: absolute;
  width: 37px;
  height: 37px;
  border: 0 solid #c3c5c8;
}
.bl, .br {
  bottom: 114px;
  border-top-width: 1px;
}
.tl, .tr {
  top: 113px;
  border-bottom-width: 1px;
}
.bl, .tl {
  left: 151px;
  border-right-width: 1px;
}
.br, .tr {
  right: 152px;
  border-left-width: 1px;
}

/* 滚动条 */
.scrollbar {
  width: 23px;
  display: flex;
  flex-direction: column;
  align-items: center;
  border-right: 1px solid #dfe2e8;
}
.ruler-toggle {
  margin: 6px 0 3px;
}
.track {
  flex: 1;
  width: 100%;
  padding: 11px 0;
  display: flex;
  flex-direction: column;
  align-items: center;
  background: #e9ebf1;
}
.thumb {
  width: 19px;
  height: 55px;
  margin-top: auto;
  margin-bottom: 79px;
  border-radius: 9px;
  background: #d3d7df;
}
.jump {
  margin-bottom: 3px;
  display: grid;
  justify-items: center;
  gap: 17px;
}
.jump span {
  display: grid;
  gap: 1px;
}
.jump b {
  width: 9px;
  height: 9px;
  border: 2px solid #9aa3bb;
  border-radius: 2px;
}

/* 样式面板 */
.panel {
  width: 401px;
  padding: 12px 12px 30px 11px;
  display: flex;
  flex-direction: column;
  color: #4a5064;
}
.panel-head {
  display: flex;
  align-items: center;
  gap: 14px;
  margin-bottom: 16px;
}
.panel-head button {
  margin-right: auto;
  gap: 6px;
}
.panel-head .ic:last-child {
  width: 20px;
  height: 20px;
}
.panel .combo {
  border: 1px solid #d9dce2;
  background: #fff;
}
.current-style {
  height: 48px;
  padding: 0 13px 3px 8px;
  border-radius: 4px;
  font-family: "Noto Sans CJK SC", sans-serif;
  font-size: 31px;
  line-height: 44px;
  font-weight: 700;
  color: #000;
}
.panel-buttons {
  display: flex;
  gap: 10px;
  margin: 7px 0 22px;
}
.panel-buttons button {
  height: 34px;
  padding: 0 9px;
  border: 1px solid #d9dce2;
  background: #fff;
}
.panel h3 {
  margin: 0 0 8px;
  font-size: 21px;
  font-weight: 400;
}
.style-list {
  flex: 1;
  margin: 0 0 7px;
  padding: 4px 18px 0 4px;
  list-style: none;
  border: 1px solid #dfe2e6;
  border-radius: 4px;
  background: #fff;
  font-family: "Noto Sans CJK SC", sans-serif;
  color: #000;
}
.style-list button {
  width: 100%;
  height: 49px;
  margin-bottom: 2px;
  padding: 0 8px 2px 5px;
  border: 1px solid transparent;
  justify-content: space-between;
  font-size: 20px;
}
.style-list .picked {
  border-color: #4a90e8;
}
.style-list .l1, .style-list .l4 {
  font-weight: 700;
}
.style-list .l1 {
  font-size: 31px;
}
.style-list .l4 {
  font-size: 28px;
}
.style-list svg {
  margin-bottom: 4px;
  fill: #000;
}
.style-list path {
  stroke: #000;
  stroke-width: 2;
  fill: none;
}
.style-list u {
  padding-right: 2px;
}
.panel-show {
  display: flex;
  align-items: center;
  gap: 10px;
  margin-bottom: 12px;
}
.panel-show label, .panel-foot label {
  color: #2b3146;
}
.panel-show .combo {
  flex: 1;
  height: 30px;
  padding: 0 8px 0 3px;
}
.panel-foot {
  display: flex;
  justify-content: space-between;
  padding-right: 7px;
}
.panel-foot label {
  display: flex;
  align-items: center;
  gap: 8px;
}
.panel-foot a {
  display: flex;
  align-items: center;
  gap: 4px;
  color: #3f7ef7;
  text-decoration: none;
}
.panel-foot input {
  appearance: none;
  width: 19px;
  height: 19px;
  border-radius: 3px;
  background: #0560b6;
  display: grid;
  place-items: center;
}
.panel-foot input::after {
  content: "";
  width: 8px;
  height: 4px;
  margin-top: -2px;
  border: solid #fff;
  border-width: 0 0 1px 1px;
  transform: rotate(-45deg);
}

/* 右侧工具条 */
.rail {
  width: 66px;
  padding: 16px 9px 12px 7px;
  display: flex;
  flex-direction: column;
  align-items: center;
  gap: 6px;
  border-left: 2px solid #e2e4ea;
}
.grip {
  width: 30px;
  height: 6px;
  margin-bottom: 14px;
  border: solid #d0d3da;
  border-width: 2px 0;
}
.rail button {
  flex: none;
  width: 48px;
  height: 48px;
  border-radius: 4px;
}
.rail .on {
  background: #dadee6;
}
.rail .rail-more {
  width: 58px;
  height: 56px;
  margin-top: auto;
  padding-top: 26px;
  border-top: 1px solid #dfe2e6;
  border-radius: 0;
}

/* 状态栏 */
.status {
  flex: none;
  height: 43px;
  padding-left: 14px;
  display: flex;
  align-items: center;
  border-top: 1px solid #dfe2e6;
}
.status .rule {
  margin: 0 7px;
}
.status button {
  height: 36px;
  padding: 0 6px;
  gap: 5px;
}
.status > button .ic {
  width: 22px;
}
.status > .words + .rule {
  margin: 0 6px;
}
.status .spell {
  margin-left: 9px;
  background: #e8f1fc;
}
.status > .caret {
  margin-left: 1px;
}
.status > .spell + .caret + .rule {
  margin-right: 0;
}
.views {
  margin-left: auto;
  padding-right: 17px;
  display: flex;
  align-items: center;
  gap: 3px;
}
.views .on {
  border-radius: 4px;
  background: #dadee6;
}
.status .zoom-value {
  gap: 6px;
  padding: 0 6px 0 3px;
  color: #4a5064;
}
.views .bold {
  width: 20px;
  height: 20px;
  stroke: #3b4660;
}
.views input {
  appearance: none;
  width: 208px;
  height: 18px;
  margin: 0 5px 0 6px;
  background: linear-gradient(to right, #47567a 49%, #d0d3d9 49%) center / 100% 2px no-repeat;
}
.views input::-webkit-slider-thumb {
  appearance: none;
  width: 18px;
  height: 18px;
  border: 2px solid #585858;
  border-radius: 50%;
  background: #eee;
}

/* 任务栏 */
.taskbar {
  flex: none;
  position: relative;
  height: 72px;
  display: flex;
  justify-content: center;
  border-top: 2px solid #474a4f;
  background: linear-gradient(to right, #222224, #1e232e 20%, #1f2235 38%, #241f20 52%, #241f1e 65%, #1d222c 78%, #1f2129);
  color: #fff;
}
.apps {
  display: flex;
  align-items: center;
  padding-left: 4px;
}
.app {
  position: relative;
  width: 60px;
  height: 60px;
  margin: 0 3px;
  border-radius: 6px;
}
.app svg {
  width: 36px;
  height: 36px;
}
.app.start {
  margin: 0 6px 0 0;
}
.app.run::after {
  content: "";
  position: absolute;
  bottom: 0;
  width: 9px;
  height: 5px;
  border-radius: 3px;
  background: #9b9b9d;
}
.app.focus {
  border: 1px solid #3a3c44;
  background: #2b2d35;
}
.app.focus::after {
  width: 24px;
  background: #76d5dc;
}
.task-search {
  width: 330px;
  height: 48px;
  margin-right: 4px;
  padding: 0 18px;
  display: flex;
  align-items: center;
  gap: 16px;
  border: 1px solid #5c5d66;
  border-radius: 24px;
  background: #40424c;
  font-size: 21px;
}
.task-search svg {
  width: 22px;
  height: 22px;
  fill: none;
  stroke: #e2e2e4;
  stroke-width: 3;
}
.task-search input {
  width: 240px;
}
.task-search input::placeholder {
  color: #d4d4d7;
}
.tray {
  position: absolute;
  right: 29px;
  top: 9px;
  display: flex;
  align-items: center;
  gap: 12px;
}
.tray svg {
  width: 24px;
  height: 24px;
  fill: none;
  stroke: #fff;
  stroke-width: 2;
}
.tray svg:first-child, .tray svg:nth-child(2), .ime {
  margin-right: 12px;
}
.ime {
  font-size: 23px;
}
.clock {
  width: 98px;
  display: grid;
  justify-items: end;
  font-size: 17px;
}
.badge {
  width: 24px;
  height: 24px;
  border-radius: 50%;
  background: #70d6dc;
  color: #102028;
  font-size: 16px;
  text-align: center;
}
.mark {
  position: absolute;
  right: 16px;
  bottom: 6px;
  font-size: 14px;
  line-height: 24px;
  color: #b5b6ba;
}
```
